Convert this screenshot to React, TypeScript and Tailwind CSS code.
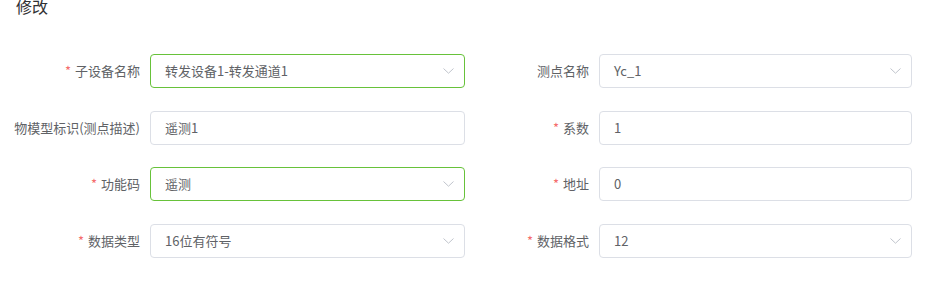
import { FC } from "react";

interface IField {
  label: string;
  value: string;
  required?: boolean;
  select?: boolean;
  focused?: boolean;
}

const left: IField[] = [
  { label: "子设备名称", value: "转发设备1-转发通道1", required: true, select: true, focused: true },
  { label: "物模型标识(测点描述)", value: "遥测1" },
  { label: "功能码", value: "遥测", required: true, select: true, focused: true },
  { label: "数据类型", value: "16位有符号", required: true, select: true },
];

const right: IField[] = [
  { label: "测点名称", value: "Yc_1", select: true },
  { label: "系数", value: "1", required: true },
  { label: "地址", value: "0", required: true },
  { label: "数据格式", value: "12", required: true, select: true },
];

const Chevron = () => (
  <svg width="11" height="6" viewBox="0 0 11 6" fill="none" className="shrink-0">
    <path d="M0.5 0.5L5.5 5.2L10.5 0.5" stroke="#c0c4cc" strokeWidth="1" />
  </svg>
);

const FormItem: FC<{ field: IField; labelWidth: string; inputWidth: string }> = ({
  field,
  labelWidth,
  inputWidth,
}) => (
  <div className="flex items-center h-[34px]">
    <div className={`${labelWidth} shrink-0 pr-[10px] text-right text-[13px] text-[#606266] whitespace-nowrap`}>
      {field.required && <span className="text-[#f56c6c] mr-[4px]">*</span>}
      {field.label}
    </div>
    <div
      className={`${inputWidth} h-[34px] flex items-center justify-between rounded-[4px] border pl-[14px] pr-[10px] ${
        field.focused ? "border-[#67c23a]" : "border-[#dcdfe6]"
      }`}
    >
      <span className="text-[13px] text-[#606266]">{field.value}</span>
      {field.select && <Chevron />}
    </div>
  </div>
);

export default function App() {
  return (
    <div
      className="w-[929px] h-[304px] bg-white overflow-hidden"
      style={{ fontFamily: '"Noto Sans CJK SC", "Noto Sans", sans-serif' }}
    >
      <h2 className="pl-[16px] text-[16px] leading-[16px] text-[#303133] -mt-[2px]">修改</h2>
      <div className="flex mt-[40px]">
        <div className="flex flex-col gap-[22.5px]">
          {left.map((f) => (
            <FormItem key={f.label} field={f} labelWidth="w-[150px]" inputWidth="w-[315px]" />
          ))}
        </div>
        <div className="flex flex-col gap-[22.5px] ml-[9px]">
          {right.map((f) => (
            <FormItem key={f.label} field={f} labelWidth="w-[125px]" inputWidth="w-[313px]" />
          ))}
        </div>
      </div>
    </div>
  );
}
